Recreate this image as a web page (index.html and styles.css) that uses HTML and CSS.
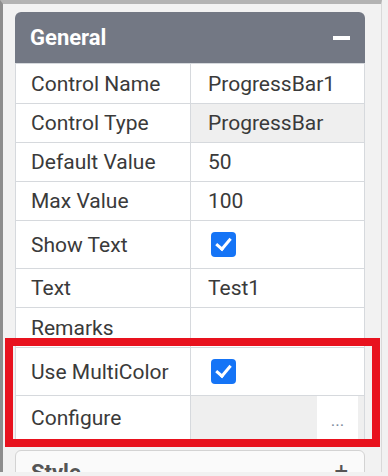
FILE: index.html
```html
<!DOCTYPE html>
<html lang="en">
<head>
    <meta charset="UTF-8">
    <title>Properties</title>
    <link rel="stylesheet" href="styles.css">
</head>
<body>
    <div class="frame">
        <div class="panel">
            <div class="panel-head">
                <span>General</span>
                <span class="minus"></span>
            </div>
            <div class="row first"><div class="lbl">Control Name</div><div class="val">ProgressBar1</div></div>
            <div class="row"><div class="lbl">Control Type</div><div class="val readonly">ProgressBar</div></div>
            <div class="row"><div class="lbl">Default Value</div><div class="val">50</div></div>
            <div class="row"><div class="lbl">Max Value</div><div class="val">100</div></div>
            <div class="row tall"><div class="lbl">Show Text</div><div class="val"><span class="check"></span></div></div>
            <div class="row"><div class="lbl">Text</div><div class="val">Test1</div></div>
            <div class="row remarks"><div class="lbl">Remarks</div><div class="val"></div></div>
            <div class="row tall"><div class="lbl">Use MultiColor</div><div class="val"><span class="check"></span></div></div>
            <div class="row conf"><div class="lbl">Configure</div><div class="val readonly picker"><span class="dots">...</span></div></div>
        </div>
        <div class="panel style-panel">
            <div class="style-head">
                <span>Style</span>
                <span class="plus">+</span>
            </div>
        </div>
        <div class="highlight"></div>
    </div>
</body>
</html>
```
FILE: styles.css
```css
body {
    margin: 0;
    background: #f1f1f1;
    font-family: Roboto, "Noto Sans", Arial, sans-serif;
    color: #3a3a3a;
}
.frame {
    position: relative;
    height: 472px;
    width: 382px;
    border-left: 3px solid #8d8d8d;
    border-top: 4px solid #b3b3b3;
    border-right: 1px solid #d9d9d9;
    padding: 8px 0 0 12px;
    box-sizing: border-box;
    overflow: hidden;
    background: #f2f2f2;
}
.panel {
    width: 350px;
    background: #fff;
    border-radius: 6px 6px 0 0;
}
.panel-head {
    height: 51px;
    background: #737884;
    border-radius: 6px 6px 0 0;
    color: #fff;
    font-weight: bold;
    font-size: 22px;
    display: flex;
    align-items: center;
    justify-content: space-between;
    padding: 0 15px;
}
.minus {
    width: 17px;
    height: 4px;
    background: #fff;
}
.row {
    display: grid;
    grid-template-columns: 176px 1fr;
    height: 38px;
    border-top: 1px solid #d6d9dd;
    font-size: 21px;
}
.row.first,
.row.remarks {
    height: 39px;
}
.row.tall {
    height: 47px;
}
.row.conf {
    height: 44px;
}
.lbl {
    padding-left: 15px;
    display: flex;
    align-items: center;
    border-right: 1px solid #d6d9dd;
    border-left: 1px solid #d6d9dd;
}
.val {
    padding-left: 17px;
    display: flex;
    align-items: center;
    border-right: 1px solid #d6d9dd;
}
.val.readonly {
    background: #efefef;
}
.picker {
    justify-content: flex-end;
    padding-right: 6px;
}
.dots {
    width: 41px;
    height: 100%;
    background: #fff;
    color: #7d8a9c;
    font-size: 17px;
    display: flex;
    align-items: flex-end;
    justify-content: center;
    padding-bottom: 10px;
    box-sizing: border-box;
}
.check {
    width: 25px;
    height: 25px;
    border-radius: 4px;
    background: #1574f6;
    margin-left: 3px;
    position: relative;
}
.check::after {
    content: "";
    position: absolute;
    left: 8px;
    top: 3px;
    width: 6px;
    height: 12px;
    border: solid #fff;
    border-width: 0 3px 3px 0;
    transform: rotate(40deg);
}
.style-panel {
    margin-top: 10px;
    height: 40px;
    border: 1px solid #d3d3d3;
    box-sizing: border-box;
    background: #fafafa;
}
.style-head {
    display: flex;
    justify-content: space-between;
    padding: 9px 16px 0 15px;
    font-size: 22px;
    font-weight: bold;
    color: #555;
}
.plus {
    font-weight: normal;
    font-size: 24px;
    line-height: 22px;
}
.highlight {
    position: absolute;
    left: 2px;
    top: 334px;
    width: 375px;
    height: 109px;
    border: 8px solid #e8121e;
    box-sizing: border-box;
}
```
